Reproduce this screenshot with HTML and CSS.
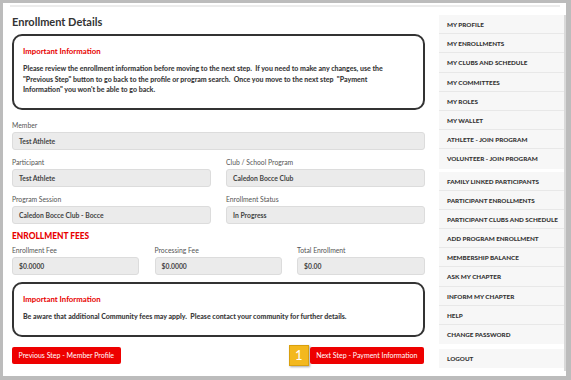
FILE: index.html
```html
<!DOCTYPE html>
<html lang="en">
<head>
  <meta charset="UTF-8">
  <title>Enrollment Details</title>
  <link rel="stylesheet" href="styles.css">
</head>
<body>
  <div class="frame">
    <div class="topbar"></div>

    <div class="layout">
      <main class="content">
        <h1>Enrollment Details</h1>

        <!-- Aviso antes do passo seguinte -->
        <div class="notice notice-top">
          <h3>Important Information</h3>
          <p>Please review the enrollment information before moving to the next step.&nbsp; If you need to make any changes, use the "Previous Step" button to go back to the profile or program search.&nbsp; Once you move to the next step &nbsp;"Payment Information" you won't be able to go back.</p>
        </div>

        <div class="field">
          <label>Member</label>
          <div class="input">Test Athlete</div>
        </div>

        <div class="row two">
          <div class="field">
            <label>Participant</label>
            <div class="input">Test Athlete</div>
          </div>
          <div class="field">
            <label>Club / School Program</label>
            <div class="input">Caledon Bocce Club</div>
          </div>
        </div>

        <div class="row two">
          <div class="field">
            <label>Program Session</label>
            <div class="input">Caledon Bocce Club - Bocce</div>
          </div>
          <div class="field">
            <label>Enrollment Status</label>
            <div class="input">In Progress</div>
          </div>
        </div>

        <h2 class="section-title">ENROLLMENT FEES</h2>

        <div class="row three">
          <div class="field">
            <label>Enrollment Fee</label>
            <div class="input">$0.0000</div>
          </div>
          <div class="field">
            <label>Processing Fee</label>
            <div class="input">$0.0000</div>
          </div>
          <div class="field">
            <label>Total Enrollment</label>
            <div class="input">$0.00</div>
          </div>
        </div>

        <div class="notice notice-bottom">
          <h3>Important Information</h3>
          <p>Be aware that additional Community fees may apply.&nbsp; Please contact your community for further details.</p>
        </div>

        <div class="actions">
          <a href="#" class="btn">Previous Step - Member Profile</a>
          <div class="next-wrap">
            <span class="step-badge">1</span>
            <a href="#" class="btn btn-next">Next Step - Payment Information</a>
          </div>
        </div>
      </main>

      <aside class="sidebar">
        <ul class="menu">
          <li>MY PROFILE</li>
          <li>MY ENROLLMENTS</li>
          <li>MY CLUBS AND SCHEDULE</li>
          <li>MY COMMITTEES</li>
          <li>MY ROLES</li>
          <li>MY WALLET</li>
          <li>ATHLETE - JOIN PROGRAM</li>
          <li>VOLUNTEER - JOIN PROGRAM</li>
        </ul>
        <ul class="menu">
          <li>FAMILY LINKED PARTICIPANTS</li>
          <li>PARTICIPANT ENROLLMENTS</li>
          <li>PARTICIPANT CLUBS AND SCHEDULE</li>
          <li>ADD PROGRAM ENROLLMENT</li>
          <li>MEMBERSHIP BALANCE</li>
          <li>ASK MY CHAPTER</li>
          <li>INFORM MY CHAPTER</li>
          <li>HELP</li>
          <li>CHANGE PASSWORD</li>
        </ul>
        <ul class="menu menu-last">
          <li>LOGOUT</li>
        </ul>
      </aside>
    </div>
  </div>
</body>
</html>
```

FILE: styles.css
```css
* {
  box-sizing: border-box;
  margin: 0;
  padding: 0;
}

html, body {
  height: 100%;
}

body {
  font-family: Lato, 'Open Sans', sans-serif;
  background: #bcbcbc;
  color: #333;
  overflow: hidden;
}

.frame {
  margin: 3px 5px 0 3px;
  height: 373px;
  background: #fff;
  padding-top: 2px;
}

.topbar {
  height: 2px;
  margin: 0 6px 0 7px;
  background: #ececec;
}

.layout {
  display: flex;
  padding: 8px 0 0 9px;
  gap: 14px;
}

.content {
  width: 413px;
}

h1 {
  font-size: 11px;
  line-height: 14px;
  font-weight: 700;
  color: #333;
  margin-bottom: 5px;
}

/* caixas de aviso */
.notice {
  border: 2px solid #333;
  border-radius: 10px;
  padding: 10px 9px 13px;
}

.notice h3 {
  font-size: 7.8px;
  line-height: 10px;
  color: #e80000;
  font-weight: 700;
  margin-bottom: 7px;
}

.notice p {
  font-size: 7px;
  line-height: 10.5px;
  font-weight: 900;
  color: #3a3a3a;
  padding-right: 12px;
}

.notice-top {
  margin-bottom: 10px;
}

.field {
  margin-bottom: 7px;
}

.field label {
  display: block;
  font-size: 6.8px;
  line-height: 10px;
  color: #555;
  margin-bottom: 2px;
}

.input {
  height: 18px;
  line-height: 16px;
  background: #ebebeb;
  border: 1px solid #dcdcdc;
  border-radius: 3px;
  padding-left: 6px;
  font-size: 6.8px;
  color: #444;
  font-weight: 700;
}

.row {
  display: grid;
}

.row.two {
  grid-template-columns: 199px 199px;
  column-gap: 15px;
}

.row.three {
  grid-template-columns: 127px 127px 128px;
  column-gap: 15.5px;
}

.row.three .field {
  margin-bottom: 7.5px;
}

.section-title {
  font-size: 8.4px;
  line-height: 10px;
  color: #e80000;
  font-weight: 900;
  margin-bottom: 4px;
}

.actions {
  display: flex;
  justify-content: space-between;
  align-items: center;
  margin-top: 8px;
  padding-right: 1px;
}

.btn {
  display: block;
  height: 17px;
  line-height: 17px;
  padding: 0 6.5px;
  background: #ee0000;
  color: #fff;
  font-size: 7px;
  text-decoration: none;
  border-radius: 2px;
  white-space: nowrap;
}

.next-wrap {
  display: flex;
  align-items: center;
  gap: 1px;
}

.step-badge {
  width: 20px;
  height: 21px;
  background: #f3b81e;
  border: 1px solid #d9a00e;
  color: #fff;
  font-size: 13px;
  line-height: 19px;
  text-align: center;
  box-shadow: 1px 1px 2px rgba(0, 0, 0, 0.35);
}

/* menu lateral */
.sidebar {
  width: 127px;
  border-right: 2px solid #d9d9d9;
}

.menu {
  list-style: none;
  background: #f7f7f7;
  margin-bottom: 3px;
}

.menu li {
  height: 19.2px;
  line-height: 19px;
  padding-left: 8px;
  border-bottom: 1px solid #e8e8e8;
  font-size: 6.3px;
  font-weight: 900;
  color: #333;
  white-space: nowrap;
}

.menu li:last-child {
  border-bottom: none;
}

.menu-last {
  margin-top: 5px;
}
```
